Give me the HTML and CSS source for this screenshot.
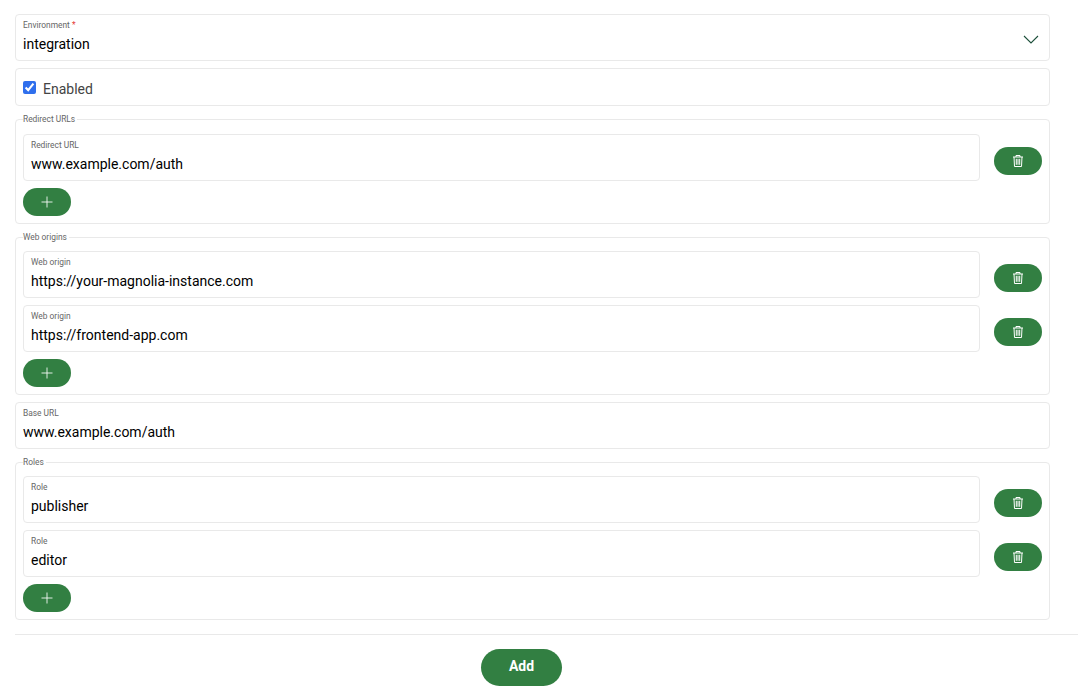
FILE: index.html
```html
<!DOCTYPE html>
<html lang="en">
<head>
  <meta charset="UTF-8">
  <title>Add environment</title>
  <link rel="stylesheet" href="styles.css">
</head>
<body>
  <form class="env-form">
    <div class="field field-top">
      <label class="field-label">Environment <span class="required">*</span></label>
      <div class="field-value">integration</div>
      <svg class="chevron" width="16" height="10" viewBox="0 0 16 10"><path d="M1 1 8 8 15 1" fill="none" stroke="#1c4f3a" stroke-width="1.1"/></svg>
    </div>

    <label class="field-check">
      <input type="checkbox" checked>
      <span>Enabled</span>
    </label>

    <fieldset class="group">
      <legend>Redirect URLs</legend>
      <div class="row">
        <div class="field">
          <label class="field-label">Redirect URL</label>
          <div class="field-value">www.example.com/auth</div>
        </div>
        <button type="button" class="pill pill-del"><svg width="10" height="12" viewBox="0 0 10 12"><use href="#trash"/></svg></button>
      </div>
      <button type="button" class="pill"><svg width="12" height="12" viewBox="0 0 12 12"><use href="#plus"/></svg></button>
    </fieldset>

    <fieldset class="group group-origins">
      <legend>Web origins</legend>
      <div class="row">
        <div class="field">
          <label class="field-label">Web origin</label>
          <div class="field-value">https://your-magnolia-instance.com</div>
        </div>
        <button type="button" class="pill pill-del"><svg width="10" height="12" viewBox="0 0 10 12"><use href="#trash"/></svg></button>
      </div>
      <div class="row">
        <div class="field">
          <label class="field-label">Web origin</label>
          <div class="field-value">https://frontend-app.com</div>
        </div>
        <button type="button" class="pill pill-del"><svg width="10" height="12" viewBox="0 0 10 12"><use href="#trash"/></svg></button>
      </div>
      <button type="button" class="pill"><svg width="12" height="12" viewBox="0 0 12 12"><use href="#plus"/></svg></button>
    </fieldset>

    <div class="field field-base">
      <label class="field-label">Base URL</label>
      <div class="field-value">www.example.com/auth</div>
    </div>

    <fieldset class="group">
      <legend>Roles</legend>
      <div class="row">
        <div class="field">
          <label class="field-label">Role</label>
          <div class="field-value">publisher</div>
        </div>
        <button type="button" class="pill pill-del"><svg width="10" height="12" viewBox="0 0 10 12"><use href="#trash"/></svg></button>
      </div>
      <div class="row">
        <div class="field">
          <label class="field-label">Role</label>
          <div class="field-value">editor</div>
        </div>
        <button type="button" class="pill pill-del"><svg width="10" height="12" viewBox="0 0 10 12"><use href="#trash"/></svg></button>
      </div>
      <button type="button" class="pill"><svg width="12" height="12" viewBox="0 0 12 12"><use href="#plus"/></svg></button>
    </fieldset>

    <div class="footer">
      <button type="button" class="btn-add">Add</button>
    </div>
  </form>

  <!-- shared icons -->
  <svg class="icon-defs" width="0" height="0">
    <symbol id="trash" viewBox="0 0 10 12">
      <path d="M0 2h10M3 2V.5h4V2M1 2l.5 9.5h7L9 2M3.3 3.8v6M5 3.8v6M6.7 3.8v6" fill="none" stroke="#fff" stroke-width="1"/>
    </symbol>
    <symbol id="plus" viewBox="0 0 12 12">
      <path d="M6 .5v11M.5 6h11" fill="none" stroke="#fff" stroke-width="1" opacity=".85"/>
    </symbol>
  </svg>
</body>
</html>
```

FILE: styles.css
```css
body {
  margin: 0;
  font-family: Roboto, "Liberation Sans", sans-serif;
  background: #fff;
  color: #000;
}
.env-form {
  display: flex;
  flex-direction: column;
  gap: 8px;
  padding: 14px 2px 0 15px;
}
.field, .field-check, .group {
  box-sizing: border-box;
  width: 1035px;
  border: 1px solid #e9e9e9;
  border-radius: 4px;
}
.field {
  position: relative;
  height: 47px;
  padding: 5px 7px 0;
}
.field-top {
  margin-bottom: -1px;
}
.field-base {
  margin-bottom: -0.5px;
}
.field-label {
  display: block;
  font-size: 8.4px;
  line-height: 10px;
  color: #666;
}
.required {
  color: #e53935;
}
.field-value {
  margin-top: 5px;
  font-size: 14px;
  line-height: 18px;
}
.chevron {
  position: absolute;
  right: 10px;
  top: 20px;
}
.field-check {
  display: flex;
  align-items: center;
  gap: 7px;
  height: 38px;
  padding: 0 7px;
  font-size: 14px;
  color: #444;
}
.field-check span {
  padding-top: 3px;
}
.field-check input {
  width: 13px;
  height: 13px;
  margin: 0;
  accent-color: #2f6fed;
}
.group {
  margin: 0;
  padding: 0 7px 7px;
  min-width: 0;
}
.group-origins {
  margin-bottom: -1px;
}
.group legend {
  padding: 0 2px 0 0;
  font-size: 8.4px;
  line-height: 11px;
  color: #666;
  margin-bottom: 8.5px;
}
.row {
  display: flex;
  align-items: flex-end;
  gap: 14px;
  margin-bottom: 7px;
}
.row .field {
  flex: 1;
  width: auto;
}
.pill {
  display: flex;
  align-items: center;
  justify-content: center;
  width: 48px;
  height: 28px;
  padding: 0;
  border: none;
  border-radius: 14px;
  background: #327f42;
}
.pill-del {
  flex: none;
  margin-bottom: 6px;
}
.footer {
  display: flex;
  justify-content: center;
  margin-top: 6px;
  padding: 14px 50px 0 0;
  border-top: 1px solid #e9e9e9;
}
.btn-add {
  width: 81px;
  height: 37px;
  padding: 0 0 3px;
  border: none;
  border-radius: 19px;
  background: #327f42;
  color: #fff;
  font: 700 14px Roboto, "Liberation Sans", sans-serif;
}
.icon-defs {
  position: absolute;
}
```
